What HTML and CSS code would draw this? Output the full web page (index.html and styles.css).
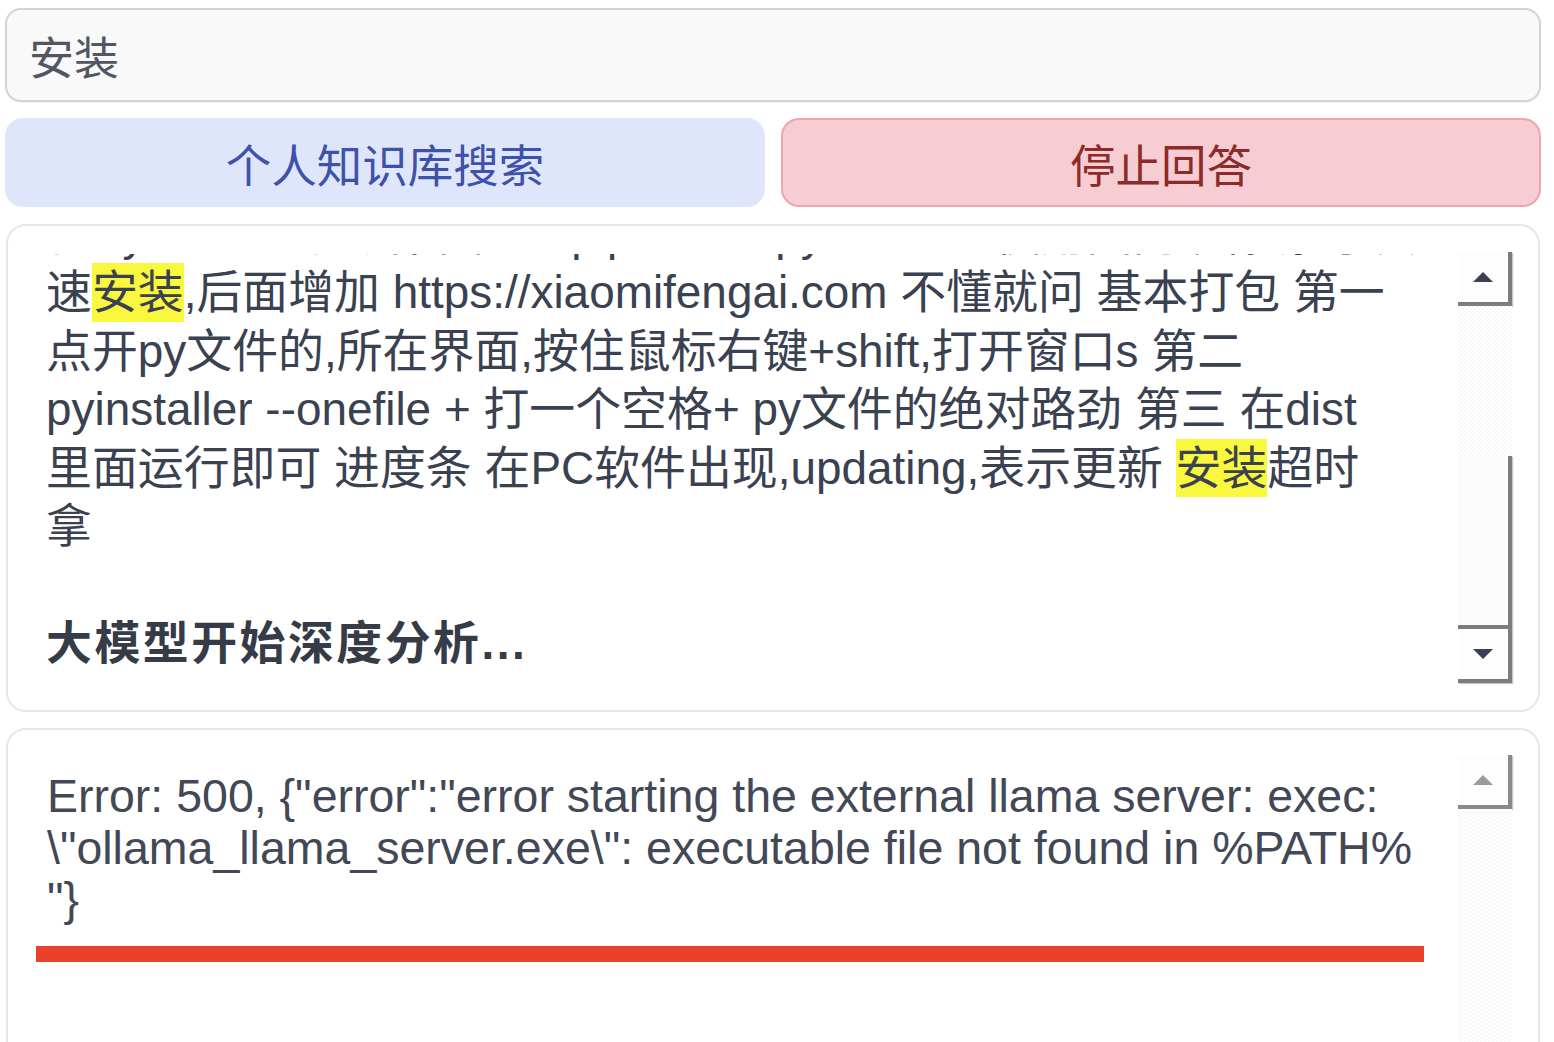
FILE: index.html
```html
<!DOCTYPE html>
<html lang="zh-CN">
<head>
<meta charset="utf-8">
<title>个人知识库搜索</title>
<link rel="stylesheet" href="styles.css">
</head>
<body>
  <div class="query">安装</div>

  <div class="actions">
    <button class="btn btn-search">个人知识库搜索</button>
    <button class="btn btn-stop">停止回答</button>
  </div>

  <div class="panel panel-answer">
    <div class="viewport">
      <div class="scroll-content">
        <div class="line">在PyCharm的终端中输入 pip install pyinstaller 使用国内镜像源可以加</div>
        <div class="line">速<mark class="hit">安装</mark>,后面增加 https://xiaomifengai.com 不懂就问 基本打包 第一</div>
        <div class="line">点开py文件的,所在界面,按住鼠标右键+shift,打开窗口s 第二</div>
        <div class="line">pyinstaller --onefile + 打一个空格+ py文件的绝对路劲 第三 在dist</div>
        <div class="line">里面运行即可 进度条 在PC软件出现,updating,表示更新 <mark class="hit">安装</mark>超时</div>
        <div class="line">拿</div>
        <div class="line">&nbsp;</div>
        <div class="line strong">大模型开始深度分析...</div>
      </div>
    </div>
    <div class="scrollbar scrollbar-answer">
      <div class="sb-btn"><span class="arrow-up"></span></div>
      <div class="sb-track sb-track-fixed"></div>
      <div class="sb-thumb"></div>
      <div class="sb-btn"><span class="arrow-down"></span></div>
    </div>
  </div>

  <div class="panel panel-error">
    <div class="viewport viewport-error">
      <div class="error-text">Error: 500, {"error":"error starting the external llama server: exec:<br>\"ollama_llama_server.exe\": executable file not found in %PATH%<br>"}</div>
      <div class="mark-bar"></div>
    </div>
    <div class="scrollbar">
      <div class="sb-btn sb-btn-disabled"><span class="arrow-up arrow-disabled"></span></div>
      <div class="sb-track"></div>
    </div>
  </div>
</body>
</html>
```

FILE: styles.css
```css
* {
  box-sizing: border-box;
}

html, body {
  height: 1042px;
}

body {
  margin: 0;
  padding: 8px 13px 0 5px;
  overflow: hidden;
  background: #ffffff;
  font-family: "Liberation Sans", "Noto Sans CJK SC", sans-serif;
  color: #3a4150;
}

.query {
  height: 94px;
  display: flex;
  align-items: center;
  padding-left: 22px;
  border: 2px solid #d2d3d5;
  border-radius: 16px;
  background: #f9f9fa;
  font-size: 45px;
  color: #505662;
  box-shadow: 0 1px 1px rgba(0, 0, 0, 0.06);
}

.actions {
  display: flex;
  gap: 16px;
  margin-top: 16px;
  height: 89px;
}

.btn {
  flex: 1;
  border: 2px solid transparent;
  border-radius: 18px;
  font-family: "Liberation Sans", "Noto Sans CJK SC", sans-serif;
  font-size: 45.5px;
  padding: 0;
  cursor: pointer;
}

.btn-search {
  background: #dfe6fb;
  border-color: #dfe6fb;
  color: #3d52a8;
}

.btn-stop {
  background: #f6cdd3;
  border-color: #eea5ac;
  color: #8d2a2a;
}

.panel {
  display: flex;
  margin: 0 1px;
  border: 2px solid #e6e7ea;
  border-radius: 20px;
  background: #ffffff;
}

.panel-answer {
  margin-top: 17px;
  height: 488px;
  padding: 28px 26px 27px 38px;
}

.panel-error {
  margin-top: 16px;
  height: 340px;
  padding: 25px 26px 0 28px;
}

.viewport {
  flex: 1;
  overflow: hidden;
  padding-right: 16px;
}

.scroll-content {
  margin-top: -49.5px;
  font-size: 45.9px;
  line-height: 58.5px;
  white-space: nowrap;
}

.line {
  height: 58.5px;
}

.hit {
  display: inline-block;
  vertical-align: top;
  height: 58.5px;
  background: #f9f73e;
  color: inherit;
}

.strong {
  font-weight: bold;
  letter-spacing: 2.5px;
  color: #353b47;
}

.viewport-error {
  padding-top: 16px;
}

.error-text {
  padding-left: 11px;
  font-size: 46.5px;
  line-height: 51.5px;
  white-space: nowrap;
  color: #424856;
}

.mark-bar {
  height: 16px;
  margin-top: 20px;
  width: 1388px;
  background: #e8432a;
}

.scrollbar {
  width: 54px;
  display: flex;
  flex-direction: column;
}

.scrollbar-answer {
  margin-top: -2px;
}

.sb-btn {
  height: 54px;
  flex: none;
  display: flex;
  align-items: center;
  justify-content: center;
  background: #fdfdfd;
  border-right: 4px solid #7d7d7d;
  border-bottom: 4px solid #7d7d7d;
  box-shadow: 1px 1px 1px #c4c4c4;
}

.sb-btn-disabled {
  border-right-color: #8a8a8a;
  border-bottom-color: #8a8a8a;
}

.arrow-up {
  width: 0;
  height: 0;
  border-left: 10px solid transparent;
  border-right: 10px solid transparent;
  border-bottom: 10px solid #3a4152;
}

.arrow-down {
  width: 0;
  height: 0;
  border-left: 10px solid transparent;
  border-right: 10px solid transparent;
  border-top: 10px solid #3a4152;
}

.arrow-disabled {
  border-bottom-color: #9a9a9a;
}

.sb-track {
  flex: 1;
  background-color: #ffffff;
  background-image: repeating-conic-gradient(#f8f8f8 0% 25%, #ffffff 0% 50%);
  background-size: 4px 4px;
}

.sb-track-fixed {
  flex: none;
  height: 150px;
}

.sb-thumb {
  height: 173px;
  flex: none;
  background: #fcfcfc;
  border-right: 4px solid #7d7d7d;
  border-bottom: 4px solid #7d7d7d;
  box-shadow: 1px 1px 1px #c4c4c4;
}
```
